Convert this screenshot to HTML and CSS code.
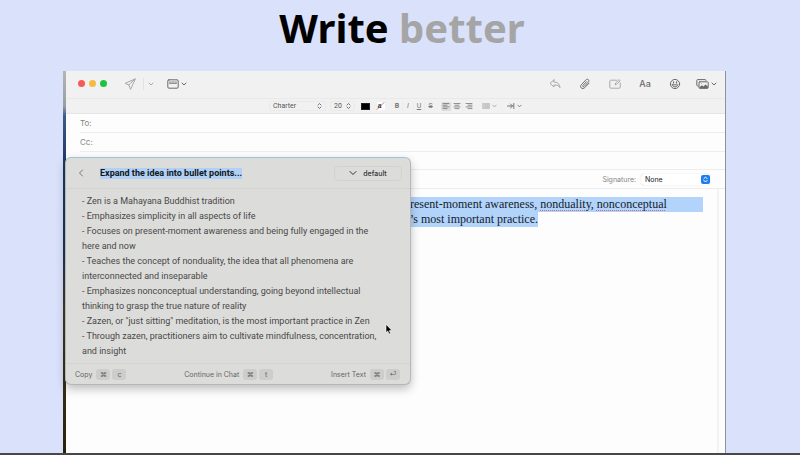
FILE: index.html
```html
<!DOCTYPE html>
<html lang="en">
<head>
    <meta charset="UTF-8">
    <meta name="viewport" content="width=device-width, initial-scale=1.0">
    <title>Write better</title>
    <link rel="stylesheet" href="styles.css">
</head>
<body>
    <h1 class="headline">Write <span class="muted">better</span></h1>

    <main class="desktop">
        <section class="window">
            <header class="titlebar">
                <div class="lights">
                    <button class="light red" aria-label="Close"></button>
                    <button class="light yellow" aria-label="Minimize"></button>
                    <button class="light green" aria-label="Zoom"></button>
                </div>
                <button class="icon-btn send pale" aria-label="Send">
                    <svg width="12" height="12" viewBox="0 0 12 12"><path d="M11 1 1 5.4l3.8 1.5L6.4 11z M11 1 4.8 6.9"/></svg>
                </button>
                <button class="icon-btn send-menu pale" aria-label="Send options">
                    <svg width="6" height="4" viewBox="0 0 6 4"><path d="M1 1l2 2 2-2"/></svg>
                </button>
                <button class="icon-btn" aria-label="Header fields">
                    <svg width="12" height="10" viewBox="0 0 12 10"><rect x=".8" y=".8" width="10.4" height="8.4" rx="1.2"/><path d="M2.5 3h1.6M5.2 3h1.6M7.9 3h1.6M2.5 4.4h7" stroke-width=".8"/></svg>
                    <svg width="6" height="4" viewBox="0 0 6 4"><path d="M1 1l2 2 2-2"/></svg>
                </button>
                <div class="actions">
                    <button class="icon-btn pale" aria-label="Reply">
                        <svg width="12" height="12" viewBox="0 0 12 12"><path d="M5 1.8 1 5.4 5 9V7c3 0 4.8.6 6 2.6C10.8 6.2 8.6 4 5 3.9z"/></svg>
                    </button>
                    <button class="icon-btn" aria-label="Attach">
                        <svg width="12" height="12" viewBox="0 0 12 12"><path d="M10 5.2 5.8 9.6c-1.2 1.2-2.7 1.2-3.6.3s-.8-2.3.3-3.4l4.4-4.6c.8-.8 1.9-.8 2.5-.2s.6 1.6-.1 2.4L5.1 8.4c-.4.4-.9.4-1.2.1s-.3-.8.1-1.2l3.6-3.7"/></svg>
                    </button>
                    <button class="icon-btn pale" aria-label="Markup">
                        <svg width="12" height="12" viewBox="0 0 12 12"><path d="M7.5 2.2H1.7c-.5 0-.9.4-.9.9v6.2c0 .5.4.9.9.9h8.6c.5 0 .9-.4.9-.9V5M6.2 6.6l.4-1.7 3.5-3.3 1.1 1.1-3.5 3.4z"/></svg>
                    </button>
                    <button class="icon-btn aa">Aa</button>
                    <button class="icon-btn" aria-label="Emoji">
                        <svg width="12" height="12" viewBox="0 0 12 12"><circle cx="6" cy="6" r="4.6"/><path d="M3.3 6.8h5.4c-.3 1.3-1.3 2.1-2.7 2.1s-2.4-.8-2.7-2.1z"/><path d="M4.5 3.8v1.2M7.5 3.8v1.2" stroke-width="1.2"/></svg>
                    </button>
                    <button class="icon-btn photos" aria-label="Photos">
                        <svg width="13" height="12" viewBox="0 0 13 12"><path d="M2.2 8H1.6c-.4 0-.8-.4-.8-.8V2.4c0-.5.3-.8.8-.8h7.6c.4 0 .8.3.8.8"/><rect x="3" y="3.8" width="9.2" height="6.6" rx=".8"/><path class="solid" d="M3.4 9.3 6 7.3l1.5 1.1 2-2 2.4 2v1.7H3.4z"/><circle class="solid" cx="5.4" cy="5.7" r=".4"/></svg>
                        <svg width="6" height="4" viewBox="0 0 6 4"><path d="M1 1l2 2 2-2"/></svg>
                    </button>
                </div>
            </header>

            <div class="formatbar">
                <div class="picker family">
                    <select aria-label="Font"><option>Charter</option></select>
                    <svg width="5" height="8" viewBox="0 0 5 8"><path d="M1 3l1.5-1.5L4 3M1 5l1.5 1.5L4 5"/></svg>
                </div>
                <div class="picker size">
                    <select aria-label="Font size"><option>20</option></select>
                    <svg width="5" height="8" viewBox="0 0 5 8"><path d="M1 3l1.5-1.5L4 3M1 5l1.5 1.5L4 5"/></svg>
                </div>
                <button class="swatch" aria-label="Text colour"></button>
                <button class="highlight" aria-label="Background colour">a<svg width="9" height="8" viewBox="0 0 9 8"><path d="M1 7.5 8 .5"/></svg></button>
                <div class="group">
                    <button><b>B</b></button>
                    <button><i>I</i></button>
                    <button><u>U</u></button>
                    <button><s>S</s></button>
                </div>
                <div class="group">
                    <button class="active" aria-label="Align left"><svg width="8" height="8" viewBox="0 0 8 8"><path d="M1 1.5h6M1 3.2h4M1 4.9h6M1 6.6h4"/></svg></button>
                    <button aria-label="Align center"><svg width="8" height="8" viewBox="0 0 8 8"><path d="M1 1.5h6M2 3.2h4M1 4.9h6M2 6.6h4"/></svg></button>
                    <button aria-label="Align right"><svg width="8" height="8" viewBox="0 0 8 8"><path d="M1 1.5h6M3 3.2h4M1 4.9h6M3 6.6h4"/></svg></button>
                </div>
                <button class="menu" aria-label="Lists">
                    <svg width="8" height="8" viewBox="0 0 8 8"><path d="M.5 2h1M2.5 2h5M.5 4h1M2.5 4h5M.5 6h1M2.5 6h5"/></svg>
                    <svg width="5" height="4" viewBox="0 0 6 4"><path d="M1 1l2 2 2-2"/></svg>
                </button>
                <button class="menu dark" aria-label="Indent">
                    <svg width="8" height="8" viewBox="0 0 8 8"><path d="M.5 4h5M3.5 2l2 2-2 2M6.8 1.5v5"/></svg>
                    <svg width="5" height="4" viewBox="0 0 6 4"><path d="M1 1l2 2 2-2"/></svg>
                </button>
            </div>

            <form class="fields">
                <div class="field"><label for="to">To:</label><input id="to" type="text"></div>
                <div class="field"><label for="cc">Cc:</label><input id="cc" type="text"></div>
                <div class="field subject"><label for="subject">Subject:</label><input id="subject" type="text"></div>
                <div class="field signature">
                    <label for="signature">Signature:</label>
                    <div class="popup-select">
                        <select id="signature"><option>None</option></select>
                        <svg width="9" height="9" viewBox="0 0 9 9"><rect width="9" height="9" rx="2"/><path d="M2.8 3.7 4.5 2l1.7 1.7M2.8 5.3 4.5 7l1.7-1.7"/></svg>
                    </div>
                </div>
            </form>

            <div class="message">
                <div class="text">
                    <p class="full">resent-moment awareness, <span class="typo">nonduality</span>, <span class="typo">nonconceptual</span></p>
                    <p>’s most important practice.</p>
                </div>
            </div>
        </section>

        <section class="assistant">
            <header class="assistant-head">
                <button class="back" aria-label="Back"><svg width="6" height="8" viewBox="0 0 6 8"><path d="M4.5 1 1.5 4l3 3"/></svg></button>
                <h2>Expand the idea into bullet points...</h2>
                <button class="model"><svg width="8" height="6" viewBox="0 0 8 6"><path d="M1 1.5l3 3 3-3"/></svg>default</button>
            </header>
            <div class="answer">
                <p>- Zen is a Mahayana Buddhist tradition</p>
                <p>- Emphasizes simplicity in all aspects of life</p>
                <p>- Focuses on present-moment awareness and being fully engaged in the here and now</p>
                <p>- Teaches the concept of nonduality, the idea that all phenomena are interconnected and inseparable</p>
                <p>- Emphasizes nonconceptual understanding, going beyond intellectual thinking to grasp the true nature of reality</p>
                <p>- Zazen, or "just sitting" meditation, is the most important practice in Zen</p>
                <p>- Through zazen, practitioners aim to cultivate mindfulness, concentration, and insight</p>
            </div>
            <footer class="assistant-foot">
                <button>Copy <kbd>⌘</kbd><kbd>c</kbd></button>
                <button>Continue in Chat <kbd>⌘</kbd><kbd>t</kbd></button>
                <button>Insert Text <kbd>⌘</kbd><kbd>⏎</kbd></button>
            </footer>
            <svg class="cursor" width="8" height="11" viewBox="0 0 8 11"><path d="M1 .6v8l1.8-1.6L4 10l1.5-.6-1.2-2.8h2.5z"/></svg>
        </section>
    </main>
</body>
</html>
```

FILE: styles.css
```css
* {
    box-sizing: border-box;
}
body {
    margin: 0;
    min-height: 100vh;
    display: flex;
    flex-direction: column;
    background-color: #dae1fb;
    border-bottom: 2px solid #48484a;
    font-family: Inter, "Liberation Sans", sans-serif;
    font-size: 7px;
    color: #222;
}
h1, h2, p {
    margin: 0;
}
button, select, input {
    font: inherit;
    color: inherit;
    background: none;
    border: none;
    padding: 0;
    margin: 0;
    outline: none;
}
button {
    display: flex;
    align-items: center;
    justify-content: center;
    cursor: pointer;
}
select {
    appearance: none;
}
svg {
    display: block;
    fill: none;
    stroke: currentColor;
    stroke-linecap: round;
    stroke-linejoin: round;
}

.headline {
    height: 71px;
    padding: 8px 0 0 4px;
    text-align: center;
    font-family: "Noto Sans", "Open Sans", sans-serif;
    font-size: 40px;
    line-height: 40px;
    font-weight: 700;
    color: #000;
}
.muted {
    color: #a5a5a5;
}

/* Desktop strip behind the mail window */
.desktop {
    position: relative;
    flex: 1;
    display: flex;
    margin: 0 74px 0 63px;
    padding-left: 3px;
    background: linear-gradient(#b5b5b5 0, #9a9da3 35px, #3d5d85 45px, #1d3a63 90px, #1f3558 180px, #453a25 240px, #2c210f 100%);
}

/* Mail window */
.window {
    flex: 1;
    display: flex;
    flex-direction: column;
    background-color: #fdfdfd;
    border-right: 1px solid #8e9299;
}
.titlebar {
    display: flex;
    align-items: center;
    height: 27px;
    padding: 0 8px 2px 12px;
    background-color: #f1f1f1;
}
.lights {
    display: flex;
    gap: 4px;
    margin-right: 17px;
}
.light {
    width: 7px;
    height: 7px;
    border-radius: 50%;
}
.red {
    background-color: #f65a54;
}
.yellow {
    background-color: #f5bb40;
}
.green {
    background-color: #1fc33d;
}
.icon-btn {
    gap: 2px;
    color: #6a6a6a;
}
.pale {
    color: #a8a8a8;
}
.send-menu {
    height: 12px;
    margin: 0 13px 0 7px;
    padding-left: 4px;
    border-left: 1px solid #e2e2e2;
}
.actions {
    display: flex;
    align-items: center;
    gap: 18px;
    margin-left: auto;
}
.aa {
    width: 12px;
    font-size: 9px;
    font-weight: 500;
}
.photos {
    margin-left: -3px;
}
.photos .solid {
    fill: currentColor;
    stroke: none;
}

.formatbar {
    display: flex;
    align-items: center;
    justify-content: center;
    height: 16px;
    background-color: #f1f1f1;
    border-top: 1px solid #e9e9e9;
    border-bottom: 1px solid #e6e6e6;
    font-family: Roboto, "Liberation Sans", sans-serif;
    color: #555;
}
.picker {
    display: flex;
    align-items: center;
    height: 10px;
    padding: 0 3px;
    margin-right: 4px;
    border: 1px solid #eaeaea;
    border-radius: 2px;
}
.picker select {
    flex: 1;
    min-width: 0;
}
.picker svg {
    stroke-width: 0.8;
}
.family {
    width: 57px;
}
.size {
    width: 25px;
    margin-right: 6px;
}
.swatch {
    width: 9px;
    height: 7px;
    background-color: #000;
    border: 1px solid #222;
}
.highlight {
    width: 8px;
    height: 8px;
    margin: 0 7px;
    background-color: #fff;
    color: #333;
    font-family: "Liberation Serif", serif;
    font-weight: 700;
    font-size: 8px;
    line-height: 8px;
}
.highlight svg {
    margin-left: -6px;
    color: #a66;
    stroke-width: 0.8;
}
.group {
    display: flex;
    margin-right: 5px;
}
.group button {
    width: 11px;
    height: 9px;
    color: #777;
    border-right: 1px solid #ececec;
}
.group button:last-child {
    border-right: none;
}
.group .active {
    background-color: #dedede;
    border-radius: 2px;
}
.group svg, .menu svg {
    stroke-width: 0.8;
}
.menu {
    gap: 2px;
    margin-left: 3px;
    margin-right: 7px;
    color: #888;
}
.dark {
    margin-right: 0;
    color: #555;
}

.field {
    display: flex;
    align-items: center;
    height: 19px;
    margin-left: 14px;
    border-bottom: 1px solid #ededed;
    font-size: 8px;
    color: #858585;
}
.field input {
    flex: 1;
    margin-left: 6px;
}
.subject {
    height: 18px;
}
.signature {
    justify-content: flex-end;
    gap: 5px;
    margin-left: 0;
    padding-right: 15px;
    font-size: 7px;
}
.popup-select {
    display: flex;
    align-items: center;
    width: 69px;
    height: 11px;
    padding-left: 4px;
    background-color: #fff;
    border-radius: 3px;
    box-shadow: 0 0 1px rgba(0, 0, 0, 0.3);
    color: #222;
}
.popup-select select {
    flex: 1;
}
.popup-select rect {
    fill: #1f7cec;
    stroke: none;
}
.popup-select path {
    stroke: #fff;
}

.message {
    flex: 1;
    margin-right: 6px;
    padding: 8px 14px 0 344px;
    border-right: 2px solid #f3f3f3;
}
.text {
    font-family: Charter, "Liberation Serif", serif;
    font-size: 12px;
    line-height: 15px;
    color: #15202c;
}
.text p {
    width: fit-content;
    white-space: nowrap;
    background-color: #b2d4fb;
}
.text .full {
    width: 100%;
}
.typo {
    text-decoration: underline dotted #d3647c 1px;
    text-underline-offset: 2px;
}

/* Assistant panel floating over the window */
.assistant {
    position: absolute;
    top: 86px;
    left: 2px;
    width: 346px;
    background-color: #dcdcda;
    border: 1px solid #b5b8b9;
    border-top-color: #9fc3dc;
    border-radius: 6px;
    box-shadow: 0 4px 10px rgba(0, 0, 0, 0.25);
}
.assistant-head {
    display: flex;
    align-items: center;
    height: 31px;
    padding: 0 8px 0 12px;
    border-bottom: 1px solid #d3d3d1;
}
.back {
    color: #777;
}
.assistant-head h2 {
    margin-left: 16px;
    font-family: Roboto, "Liberation Sans", sans-serif;
    font-size: 9px;
    line-height: 11px;
    font-weight: 700;
    color: #101820;
    background-color: #b0d0f5;
}
.model {
    gap: 6px;
    width: 68px;
    height: 15px;
    margin-left: auto;
    border: 1px solid #d2d2d0;
    border-radius: 4px;
    font-weight: 500;
    color: #333;
}
.answer {
    padding: 5px 26px 4px 16px;
    font-family: Roboto, "Liberation Sans", sans-serif;
    font-size: 9px;
    line-height: 15px;
    color: #484848;
}
.assistant-foot {
    display: flex;
    align-items: center;
    justify-content: space-between;
    height: 21px;
    padding: 0 10px 0 9px;
    border-top: 1px solid #d3d3d1;
}
.assistant-foot button {
    gap: 2px;
    color: #666;
}
kbd {
    width: 14px;
    height: 11px;
    border-radius: 3px;
    background-color: #cdcdcb;
    font-family: Inter, "DejaVu Sans", sans-serif;
    line-height: 11px;
    text-align: center;
}
kbd:first-of-type {
    margin-left: 2px;
}
.cursor {
    position: absolute;
    top: 166px;
    left: 319px;
}
.cursor path {
    fill: #000;
    stroke: #fff;
    stroke-width: 0.6;
}
```
